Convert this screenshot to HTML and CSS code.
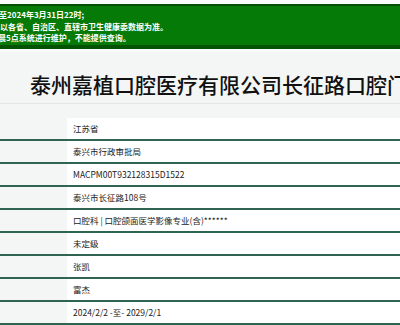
FILE: index.html
```html
<!DOCTYPE html>
<html lang="zh-CN">

<head>
    <meta charset="UTF-8">
    <meta name="viewport" content="width=device-width, initial-scale=1.0">
    <title>医疗机构查询</title>

    <link rel="stylesheet" href="styles.css">
</head>

<body>

    <div class="notice">
        <p class="line-1">至2024年3月31日22时;</p>
        <p>以各省、自治区、直辖市卫生健康委数据为准。</p>
        <p class="line-3">晨5点系统进行维护，不能提供查询。</p>
    </div>

    <section class="page">
        <h1 class="title">泰州嘉植口腔医疗有限公司长征路口腔门诊部</h1>

        <div class="info">
            <div class="row">
                <div class="label"></div>
                <div class="value">江苏省</div>
            </div>
            <div class="row">
                <div class="label"></div>
                <div class="value">泰兴市行政审批局</div>
            </div>
            <div class="row">
                <div class="label"></div>
                <div class="value">MACPM00T932128315D1522</div>
            </div>
            <div class="row">
                <div class="label"></div>
                <div class="value">泰兴市长征路108号</div>
            </div>
            <div class="row">
                <div class="label"></div>
                <div class="value">口腔科 | 口腔颌面医学影像专业(含)******</div>
            </div>
            <div class="row">
                <div class="label"></div>
                <div class="value">未定级</div>
            </div>
            <div class="row">
                <div class="label"></div>
                <div class="value">张凯</div>
            </div>
            <div class="row">
                <div class="label"></div>
                <div class="value">富杰</div>
            </div>
            <div class="row">
                <div class="label"></div>
                <div class="value">2024/2/2 -至- 2029/2/1</div>
            </div>
        </div>
    </section>

</body>

</html>
```

FILE: styles.css
```css
* {
    margin: 0;
    padding: 0;
    box-sizing: border-box;
}

body {
    font-family: "Noto Sans CJK SC", "Liberation Sans", sans-serif;
    background-color: #f9fbfb;
    color: #222;
    overflow: hidden;
}

.notice {
    margin-top: 4px;
    background-color: #067a06;
    border-top: 2px solid #035003;
    border-bottom: 4px solid #045204;
    color: #fff;
    font-size: 8px;
    font-weight: bold;
    line-height: 11.7px;
    padding: 3px 0 1px 0;
    white-space: nowrap;
    overflow: hidden;
}

.notice .line-1 {
    margin-left: -1px;
}

.notice .line-3 {
    margin-left: -2px;
}

.page {
    margin-top: 3px;
    background-color: #f4f6f6;
    padding-bottom: 20px;
}

.title {
    font-size: 21px;
    font-weight: 500;
    color: #111;
    line-height: 24px;
    padding: 20px 0 7px 30px;
    white-space: nowrap;
    overflow: hidden;
    border-bottom: 1px solid #e4e6e6;
}

.info {
    margin-top: 14px;
}

.row {
    display: grid;
    grid-template-columns: 67px 1fr;
    height: 23px;
    border-bottom: 2px solid #2f6450;
}

.label {
    background-color: #f4f6f6;
}

.value {
    background-color: #fff;
    font-size: 8.5px;
    line-height: 21px;
    padding-left: 6px;
    white-space: nowrap;
}
```
